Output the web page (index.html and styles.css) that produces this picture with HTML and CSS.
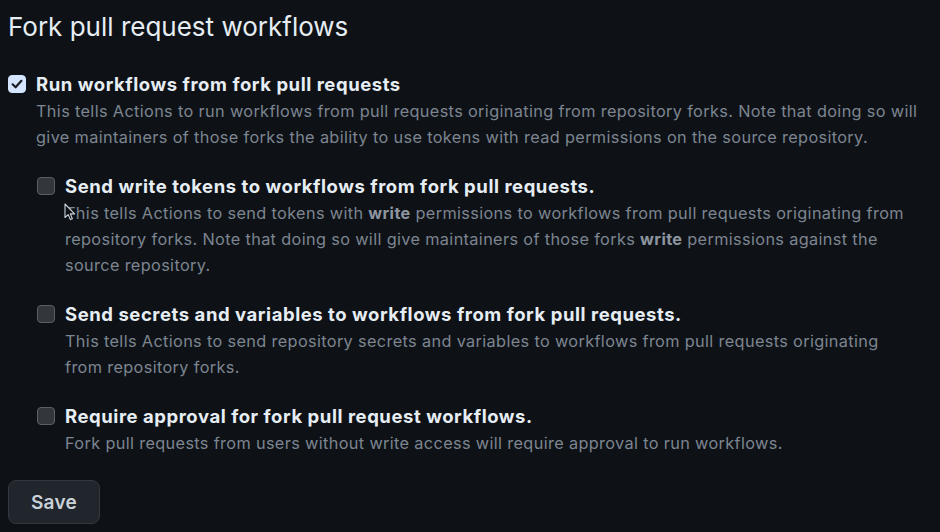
FILE: index.html
```html
<!DOCTYPE html>
<html lang="en">
<head>
<meta charset="utf-8">
<title>Fork pull request workflows</title>
<link rel="stylesheet" href="styles.css">
</head>
<body>
<div class="page">
  <h2 class="title">Fork pull request workflows</h2>

  <div class="option">
    <span class="box checked">
      <svg viewBox="0 0 18 18" width="18" height="18"><path d="M4.6 9.3 L7.6 12.3 L13.4 5.8" fill="none" stroke="#1b1f24" stroke-width="2.2" stroke-linecap="round" stroke-linejoin="round"/></svg>
    </span>
    <div class="text">
      <div class="label">Run workflows from fork pull requests</div>
      <div class="desc">This tells Actions to run workflows from pull requests originating from repository forks. Note that doing so will give maintainers of those forks the ability to use tokens with read permissions on the source repository.</div>
    </div>
  </div>

  <div class="nested">
    <div class="option">
      <span class="box"></span>
      <div class="text">
        <div class="label">Send write tokens to workflows from fork pull requests.</div>
        <div class="desc">This tells Actions to send tokens with <b>write</b> permissions to workflows from pull requests originating from repository forks. Note that doing so will give maintainers of those forks <b>write</b> permissions against the source repository.</div>
      </div>
    </div>

    <div class="option">
      <span class="box"></span>
      <div class="text">
        <div class="label">Send secrets and variables to workflows from fork pull requests.</div>
        <div class="desc">This tells Actions to send repository secrets and variables to workflows from pull requests originating from repository forks.</div>
      </div>
    </div>

    <div class="option">
      <span class="box"></span>
      <div class="text">
        <div class="label">Require approval for fork pull request workflows.</div>
        <div class="desc">Fork pull requests from users without write access will require approval to run workflows.</div>
      </div>
    </div>
  </div>

  <button class="save" type="button">Save</button>

  <svg class="cursor" viewBox="0 0 12 18" width="12" height="18"><path d="M1 1 L1 14.5 L4.2 11.6 L6.4 16.6 L8.4 15.7 L6.3 10.9 L10.6 10.9 Z" fill="#0d1117" stroke="#c9d1d9" stroke-width="1.1" stroke-linejoin="round"/></svg>
</div>
</body>
</html>
```

FILE: styles.css
```css
html, body {
  margin: 0;
  padding: 0;
  background: #0e1217;
}

.page {
  position: relative;
  padding: 9px 22px 0 8px;
  font-family: Inter, "Liberation Sans", sans-serif;
  color: #e6edf3;
}

.title {
  margin: 0 0 25px 0;
  font-size: 26px;
  line-height: 36px;
  font-weight: 400;
  color: #e6edf3;
}

.option {
  display: flex;
  gap: 10px;
  margin-bottom: 22px;
}

.nested {
  padding-left: 29px;
}

.box {
  flex: none;
  width: 18px;
  height: 18px;
  margin-top: 5px;
  box-sizing: border-box;
  border-radius: 4px;
  background: #33373c;
  border: 1px solid #5b6066;
}

.box.checked {
  background: #d3e5ff;
  border-color: #d3e5ff;
}

.box svg {
  display: block;
  margin: -1px;
}

.label {
  font-size: 18.5px;
  line-height: 28px;
  font-weight: 700;
  letter-spacing: 0.55px;
  color: #e6edf3;
}

.desc {
  font-size: 16.3px;
  line-height: 26px;
  letter-spacing: 0.35px;
  color: #7d8590;
}

.desc b {
  font-weight: 700;
  color: #8d96a0;
}

.save {
  display: block;
  margin-top: 24px;
  width: 92px;
  height: 44px;
  border-radius: 8px;
  background: #21262d;
  border: 1px solid #33383f;
  color: #c9d1d9;
  font-family: Inter, "Liberation Sans", sans-serif;
  font-size: 19px;
  font-weight: 600;
  letter-spacing: 0.3px;
  padding: 0;
}

.cursor {
  position: absolute;
  left: 64px;
  top: 203px;
}
```
